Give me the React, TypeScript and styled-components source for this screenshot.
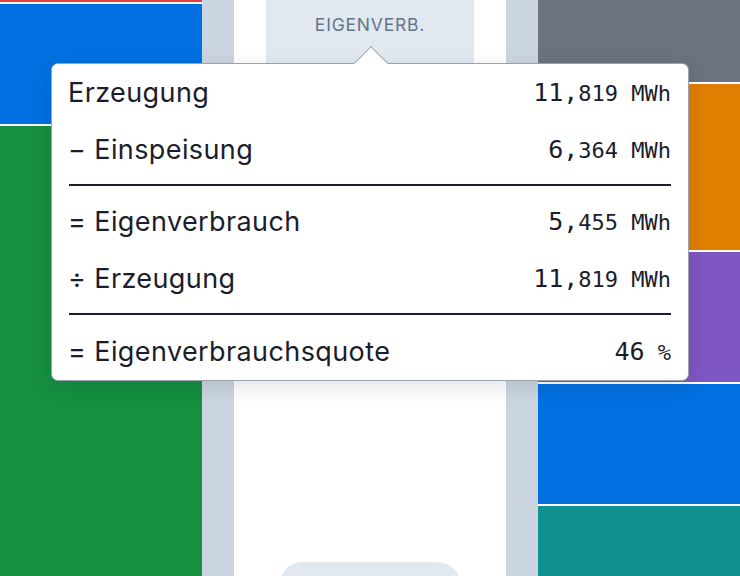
import React from "react";
import styled, { createGlobalStyle } from "styled-components";

const Global = createGlobalStyle`
  html, body { margin: 0; padding: 0; background: #ffffff; }
  #root { width: 740px; height: 576px; overflow: hidden; }
  * { box-sizing: border-box; }
`;

const Page = styled.div`
  position: relative;
  width: 740px;
  height: 576px;
  display: flex;
  overflow: hidden;
  font-family: Inter, "Noto Sans", sans-serif;
`;

const Stack = styled.div`
  width: 202px;
  flex: none;
  display: flex;
  flex-direction: column;
  gap: 2px;
  background: #ffffff;
`;

const Segment = styled.div<{ $color: string; $h?: number }>`
  background: ${(p) => p.$color};
  ${(p) => (p.$h !== undefined ? `height: ${p.$h}px; flex: none;` : "flex: 1;")}
`;

const Gutter = styled.div`
  width: 32px;
  flex: none;
  background: #cbd5e1;
`;

const Center = styled.div`
  width: 272px;
  flex: none;
  background: #ffffff;
  padding: 0 32px;
  display: flex;
  flex-direction: column;
  align-items: center;
`;

const HeaderBox = styled.div`
  width: 100%;
  height: 90px;
  background: #e2e8f0;
  display: flex;
  justify-content: center;
  padding-top: 14px;
  font-size: 17.5px;
  line-height: 22px;
  color: #64748b;
  letter-spacing: 0.8px;
  text-transform: uppercase;
`;

const Spacer = styled.div`
  flex: 1;
`;

const Pill = styled.div`
  width: 180px;
  height: 44px;
  flex: none;
  margin-bottom: -30px;
  border-radius: 22px;
  background: #e2e8f0;
`;

const Tooltip = styled.div`
  position: absolute;
  left: 51px;
  top: 63px;
  width: 638px;
  height: 318px;
  background: #ffffff;
  border: 1px solid #9ca3af;
  border-radius: 7px;
  box-shadow: 0 6px 20px rgba(15, 23, 42, 0.12);
  padding: 0 17px;
  display: flex;
  flex-direction: column;
  color: #1b1d2b;
`;

const Arrow = styled.div`
  position: absolute;
  left: 307px;
  top: -13px;
  width: 24px;
  height: 24px;
  background: #ffffff;
  border-top: 1px solid #9ca3af;
  border-left: 1px solid #9ca3af;
  transform: rotate(45deg);
`;

const Row = styled.div`
  position: relative;
  height: 57px;
  display: flex;
  align-items: center;
  justify-content: space-between;
`;

const Label = styled.span`
  font-size: 27px;
  letter-spacing: 0.4px;
  margin-left: -1px;
`;

const Value = styled.span`
  font-family: "DejaVu Sans Mono", "Liberation Mono", monospace;
  display: inline-flex;
  align-items: baseline;
  white-space: pre;
`;

const Big = styled.span`
  font-size: 25px;
`;

const Small = styled.span`
  font-size: 22px;
`;

const Divider = styled.div`
  height: 2px;
  background: #1b1d2b;
  margin: 6px 0 8px;
  flex: none;
`;

type Line = { label: string; big: string; small: string };

const rows: (Line | "divider")[] = [
  { label: "Erzeugung", big: "11,", small: "819 MWh" },
  { label: "− Einspeisung", big: "6,", small: "364 MWh" },
  "divider",
  { label: "= Eigenverbrauch", big: "5,", small: "455 MWh" },
  { label: "÷ Erzeugung", big: "11,", small: "819 MWh" },
  "divider",
  { label: "= Eigenverbrauchsquote", big: "46", small: " %" },
];

export default function App() {
  return (
    <>
      <Global />
      <Page>
        <Stack>
          <Segment $color="#e53e3e" $h={2} />
          <Segment $color="#0070e0" $h={120} />
          <Segment $color="#168f40" />
        </Stack>
        <Gutter />
        <Center>
          <HeaderBox>Eigenverb.</HeaderBox>
          <Spacer />
          <Pill />
        </Center>
        <Gutter />
        <Stack>
          <Segment $color="#6b7280" $h={82} />
          <Segment $color="#e07f00" $h={166} />
          <Segment $color="#7e57c2" $h={130} />
          <Segment $color="#0070e0" $h={120} />
          <Segment $color="#0e9090" />
        </Stack>
        <Tooltip>
          <Arrow />
          {rows.map((r, i) =>
            r === "divider" ? (
              <Divider key={i} />
            ) : (
              <Row key={i}>
                <Label>{r.label}</Label>
                <Value>
                  <Big>{r.big}</Big>
                  <Small>{r.small}</Small>
                </Value>
              </Row>
            )
          )}
        </Tooltip>
      </Page>
    </>
  );
}
